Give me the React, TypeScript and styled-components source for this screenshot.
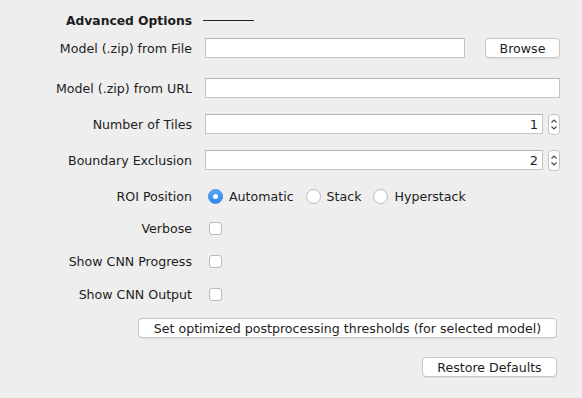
import styled, { createGlobalStyle } from "styled-components";

const GlobalStyle = createGlobalStyle`
  html, body { margin: 0; padding: 0; background: #eeeeee; }
  body { font-family: "DejaVu Sans", "Liberation Sans", sans-serif; font-size: 12.6px; color: #1d1d1d; }
`;

const Panel = styled.div`
  width: 582px;
  height: 398px;
  display: flex;
  flex-direction: column;
  background: #eeeeee;
  padding-top: 11px;
  box-sizing: border-box;
`;

const Row = styled.div<{ $gap?: number }>`
  display: grid;
  grid-template-columns: 192px 355px;
  column-gap: 13px;
  height: 20px;
  align-items: center;
  margin-top: ${({ $gap }) => $gap ?? 0}px;
`;

const Label = styled.div<{ $bold?: boolean }>`
  text-align: right;
  white-space: nowrap;
  font-weight: ${({ $bold }) => ($bold ? 700 : 400)};
  font-size: ${({ $bold }) => ($bold ? "12.3px" : "inherit")};
`;

const Controls = styled.div`
  display: flex;
  align-items: center;
  height: 20px;
`;

const Rule = styled.div`
  width: 51px;
  height: 1px;
  background: #222;
  margin-left: -2px;
  margin-top: -1px;
`;

const Field = styled.div<{ $width?: number }>`
  box-sizing: border-box;
  height: 20px;
  background: #fff;
  border: 1px solid #c4c4c4;
  border-top-color: #b4b4b4;
  ${({ $width }) => ($width ? `width: ${$width}px;` : "flex: 1;")}
  display: flex;
  align-items: center;
  justify-content: flex-end;
  padding-right: 4px;
  font-size: 13px;
`;

const Button = styled.div<{ $width: number; $offset?: number }>`
  box-sizing: border-box;
  width: ${({ $width }) => $width}px;
  height: 20px;
  margin-left: ${({ $offset }) => $offset ?? 0}px;
  background: #fff;
  border: 1px solid #c6c6c6;
  border-radius: 4px;
  box-shadow: 0 1px 0 rgba(0, 0, 0, 0.06);
  display: flex;
  align-items: center;
  justify-content: center;
  white-space: nowrap;
`;

const Spinner = styled.div`
  box-sizing: border-box;
  width: 12px;
  height: 21px;
  margin-left: 5px;
  background: #fff;
  border: 1px solid #c4c4c4;
  border-radius: 4px;
  display: flex;
  align-items: center;
  justify-content: center;
`;

const RadioGroup = styled.div`
  display: flex;
  align-items: center;
  padding-left: 3px;
`;

const RadioOption = styled.label`
  display: flex;
  align-items: center;
  gap: 6px;
  margin-right: 12px;
  white-space: nowrap;
`;

const RadioDot = styled.span<{ $on?: boolean }>`
  box-sizing: border-box;
  width: 15px;
  height: 15px;
  border-radius: 50%;
  display: flex;
  align-items: center;
  justify-content: center;
  background: ${({ $on }) => ($on ? "linear-gradient(#5aa6f8, #2f86ee)" : "#fff")};
  border: 1px solid ${({ $on }) => ($on ? "#3b8bea" : "#b9b9b9")};
  &::after {
    content: "";
    display: ${({ $on }) => ($on ? "block" : "none")};
    width: 5px;
    height: 5px;
    border-radius: 50%;
    background: #fff;
  }
`;

const Check = styled.span`
  box-sizing: border-box;
  width: 13px;
  height: 13px;
  margin-left: 4px;
  background: #fff;
  border: 1px solid #b9b9b9;
  border-radius: 3px;
`;

const ButtonRow = styled.div<{ $gap: number }>`
  width: 557px;
  display: flex;
  justify-content: flex-end;
  margin-top: ${({ $gap }) => $gap}px;
`;

const Chevrons = () => (
  <svg width="8" height="15" viewBox="0 0 8 15">
    <path d="M1.5 5.5 L4 3 L6.5 5.5" fill="none" stroke="#444" strokeWidth="1.1" />
    <path d="M1.5 9.5 L4 12 L6.5 9.5" fill="none" stroke="#444" strokeWidth="1.1" />
  </svg>
);

export default function App() {
  return (
    <Panel>
      <GlobalStyle />
      <Row>
        <Label $bold>Advanced Options</Label>
        <Controls>
          <Rule />
        </Controls>
      </Row>
      <Row $gap={7}>
        <Label>Model (.zip) from File</Label>
        <Controls>
          <Field />
          <Button $width={75} $offset={20}>Browse</Button>
        </Controls>
      </Row>
      <Row $gap={20}>
        <Label>Model (.zip) from URL</Label>
        <Controls>
          <Field />
        </Controls>
      </Row>
      <Row $gap={16}>
        <Label>Number of Tiles</Label>
        <Controls>
          <Field $width={340}>1</Field>
          <Spinner>
            <Chevrons />
          </Spinner>
        </Controls>
      </Row>
      <Row $gap={16}>
        <Label>Boundary Exclusion</Label>
        <Controls>
          <Field $width={340}>2</Field>
          <Spinner>
            <Chevrons />
          </Spinner>
        </Controls>
      </Row>
      <Row $gap={16}>
        <Label>ROI Position</Label>
        <RadioGroup>
          <RadioOption>
            <RadioDot $on />
            Automatic
          </RadioOption>
          <RadioOption>
            <RadioDot />
            Stack
          </RadioOption>
          <RadioOption>
            <RadioDot />
            Hyperstack
          </RadioOption>
        </RadioGroup>
      </Row>
      <Row $gap={12}>
        <Label>Verbose</Label>
        <Controls>
          <Check />
        </Controls>
      </Row>
      <Row $gap={13}>
        <Label>Show CNN Progress</Label>
        <Controls>
          <Check />
        </Controls>
      </Row>
      <Row $gap={13}>
        <Label>Show CNN Output</Label>
        <Controls>
          <Check />
        </Controls>
      </Row>
      <ButtonRow $gap={14}>
        <Button $width={419}>Set optimized postprocessing thresholds (for selected model)</Button>
      </ButtonRow>
      <ButtonRow $gap={19}>
        <Button $width={135}>Restore Defaults</Button>
      </ButtonRow>
    </Panel>
  );
}
